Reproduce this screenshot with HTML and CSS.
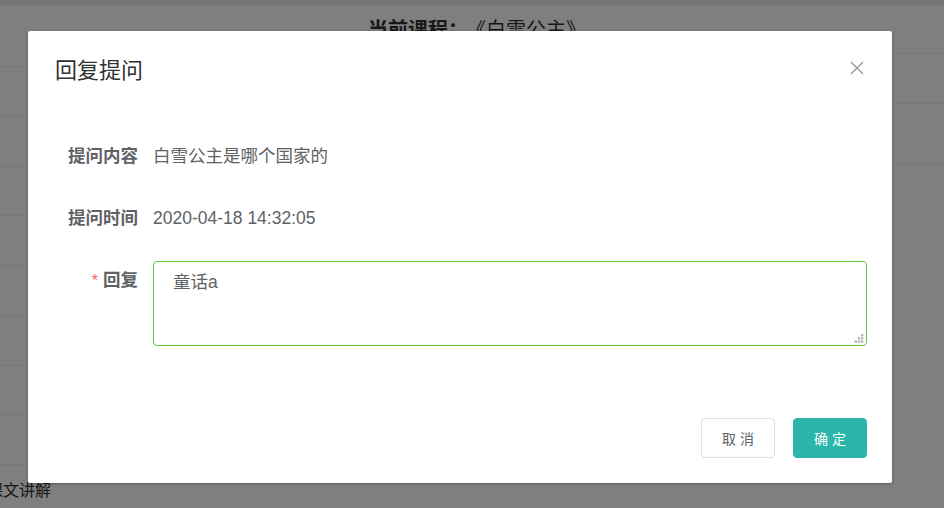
FILE: index.html
```html
<!DOCTYPE html>
<html lang="zh">
<head>
<meta charset="utf-8">
<title>回复提问</title>
<link rel="stylesheet" href="styles.css">
</head>
<body>
<div class="page">
  <div class="topbar"></div>
  <div class="course-title"><b>当前课程：</b><span class="book">《白雪公主》</span></div>
  <div class="columns">
    <div class="left-col">
      <div class="lrow"></div>
      <div class="lrow"></div>
      <div class="lrow"></div>
      <div class="lrow"></div>
      <div class="lrow"></div>
      <div class="lrow"></div>
      <div class="lrow"></div>
      <div class="lrow"></div>
      <div class="lrow"><span class="ltext">课文讲解</span></div>
    </div>
    <div class="right-col">
      <div class="rrow r50"></div>
      <div class="rrow r60"></div>
      <div class="rrow r61"></div>
    </div>
  </div>

  <div class="overlay">
    <div class="dialog">
      <div class="dialog-header">
        <span class="dialog-title">回复提问</span>
        <button class="close-btn" aria-label="关闭">
          <svg width="14" height="14" viewBox="0 0 14 14"><path d="M1 1 L13 13 M13 1 L1 13" stroke="#909399" stroke-width="1.3" fill="none"/></svg>
        </button>
      </div>
      <div class="dialog-body">
        <div class="form-item">
          <label class="form-label">提问内容</label>
          <div class="form-value">白雪公主是哪个国家的</div>
        </div>
        <div class="form-item">
          <label class="form-label">提问时间</label>
          <div class="form-value">2020-04-18 14:32:05</div>
        </div>
        <div class="form-item">
          <label class="form-label"><span class="req">*</span>回复</label>
          <div class="form-value textarea-wrap">
            <textarea class="reply">童话a</textarea>
            <svg class="grip" width="10" height="10" viewBox="0 0 10 10">
              <rect x="7" y="1" width="2.4" height="2.4" fill="#b8b8b8"/>
              <rect x="3.8" y="4.2" width="2.4" height="2.4" fill="#b8b8b8"/>
              <rect x="7" y="4.2" width="2.4" height="2.4" fill="#b8b8b8"/>
              <rect x="0.6" y="7.4" width="2.4" height="2.4" fill="#b8b8b8"/>
              <rect x="3.8" y="7.4" width="2.4" height="2.4" fill="#b8b8b8"/>
              <rect x="7" y="7.4" width="2.4" height="2.4" fill="#b8b8b8"/>
            </svg>
          </div>
        </div>
      </div>
      <div class="dialog-footer">
        <button class="btn btn-default">取 消</button>
        <button class="btn btn-primary">确 定</button>
      </div>
    </div>
  </div>
</div>
</body>
</html>
```

FILE: styles.css
```css
* { box-sizing: border-box; }
html, body { margin: 0; padding: 0; }
body {
  font-family: "Liberation Sans", "Noto Sans CJK SC", sans-serif;
  background: #fff;
  color: #303133;
}
.page {
  position: relative;
  width: 944px;
  height: 508px;
  overflow: hidden;
  background: #fff;
}
.topbar { height: 5px; background: #ececec; }
.course-title {
  height: 48px;
  line-height: 50px;
  text-align: center;
  font-size: 20px;
  color: #303133;
  padding-left: 10px;
}
.course-title b { font-weight: bold; }
.book { margin-left: 8px; }
.columns { display: flex; }
.left-col { width: 300px; padding-top: 13px; }
.lrow {
  height: 49.75px;
  border-top: 1px solid #f0f0f0;
  display: flex;
  align-items: center;
  font-size: 16px;
  color: #303133;
}
.ltext { margin-left: -13px; }
.right-col { flex: 1; }
.rrow { border-top: 1px solid #f0f0f0; }
.r50 { height: 50px; }
.r60 { height: 60px; }
.r61 { height: 61px; }

.overlay {
  position: absolute;
  inset: 0;
  background: rgba(0, 0, 0, 0.5);
  padding: 31px 0 0 28px;
}
.dialog {
  width: 864px;
  height: 452px;
  background: #fff;
  border-radius: 2px;
  box-shadow: 0 1px 3px rgba(0, 0, 0, 0.3);
  display: flex;
  flex-direction: column;
}
.dialog-header {
  padding: 25px 25px 10px 27px;
  display: flex;
  justify-content: space-between;
  align-items: center;
}
.dialog-title {
  font-size: 22px;
  line-height: 30px;
  color: #303133;
}
.close-btn {
  border: 0;
  background: none;
  padding: 0;
  margin-right: 3px;
  margin-top: -6px;
  width: 14px;
  height: 14px;
  display: flex;
}
.dialog-body { padding: 40px 25px 0; flex: 1; }
.form-item {
  display: flex;
  margin-bottom: 22px;
  font-size: 17.5px;
  line-height: 40px;
}
.form-item:last-child { margin-top: 1px; }
.form-label {
  width: 100px;
  flex: none;
  text-align: right;
  padding-right: 15px;
  font-weight: bold;
  color: #606266;
}
.req { color: #f56c6c; margin-right: 5px; font-weight: normal; font-size: 17px; }
.form-value { flex: 1; color: #606266; }
.textarea-wrap { position: relative; height: 85px; margin-top: 1px; }
.reply {
  display: block;
  width: 100%;
  height: 85px;
  resize: none;
  border: 1px solid #67c23a;
  border-radius: 4px;
  padding: 7px 19px;
  font-family: "Liberation Sans", "Noto Sans CJK SC", sans-serif;
  font-size: 17.5px;
  line-height: 26px;
  color: #606266;
  outline: none;
}
.grip { position: absolute; right: 3px; bottom: 3px; }
.dialog-footer {
  padding: 0 25px 25px;
  display: flex;
  justify-content: flex-end;
  gap: 18px;
}
.btn {
  height: 40px;
  width: 74px;
  border-radius: 4px;
  font-size: 14px;
  font-family: "Liberation Sans", "Noto Sans CJK SC", sans-serif;
  padding: 0;
}
.btn-default { background: #fff; border: 1px solid #dcdfe6; color: #606266; }
.btn-primary { background: #2bb5ac; border: 1px solid #2bb5ac; color: #fff; }
```
